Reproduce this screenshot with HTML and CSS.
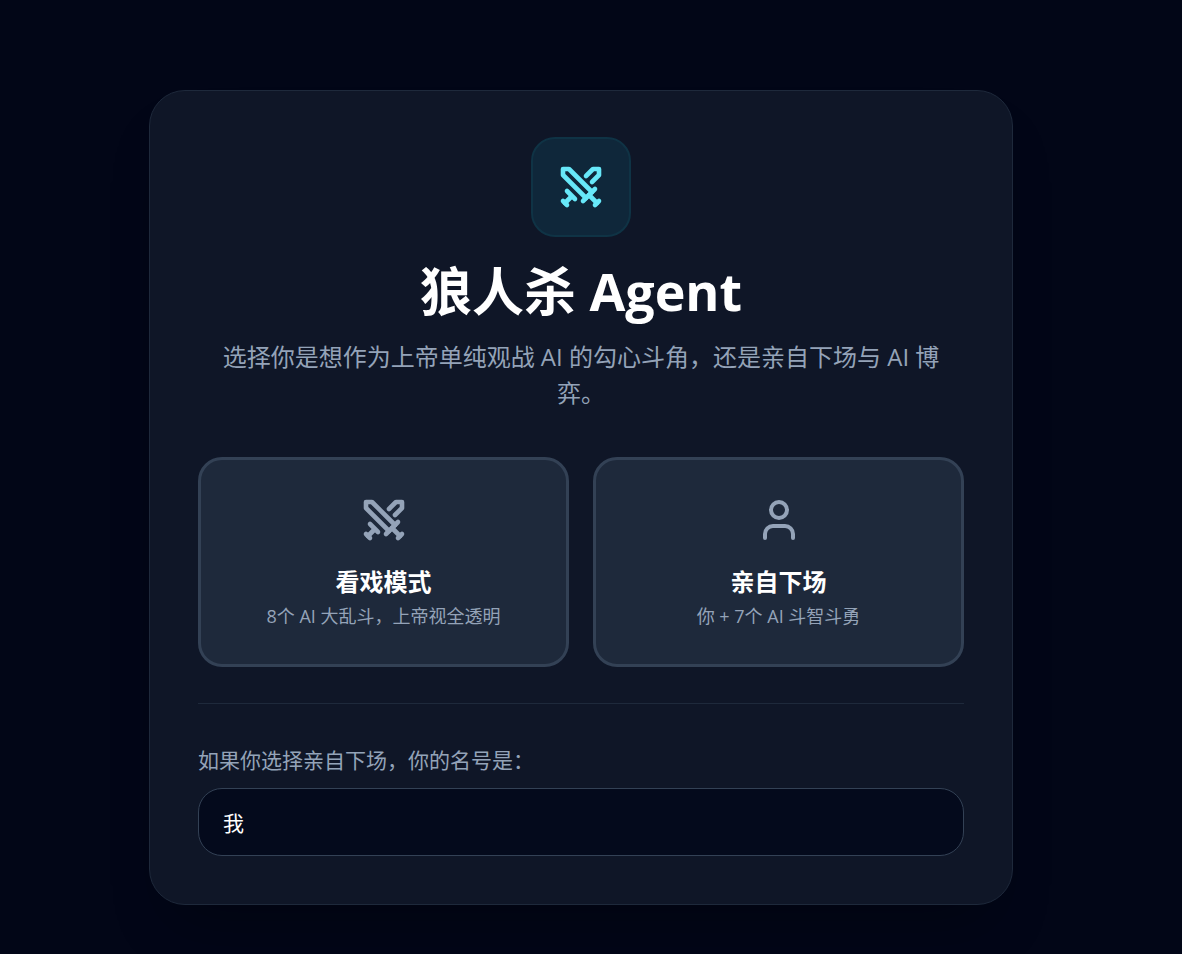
FILE: index.html
```html
<!DOCTYPE html>
<html lang="zh-CN">
<head>
<meta charset="utf-8">
<meta name="viewport" content="width=device-width, initial-scale=1">
<title>狼人杀 Agent</title>
<link rel="stylesheet" href="styles.css">
</head>
<body>
<main class="page">
  <section class="card">
    <header class="intro">
      <div class="badge">
        <svg class="icon icon-swords" viewBox="0 0 24 24" aria-hidden="true">
          <polyline points="14.5 17.5 3 6 3 3 6 3 17.5 14.5"/>
          <line x1="13" x2="19" y1="19" y2="13"/>
          <line x1="16" x2="20" y1="16" y2="20"/>
          <line x1="19" x2="21" y1="21" y2="19"/>
          <polyline points="14.5 6.5 18 3 21 3 21 6 17.5 9.5"/>
          <line x1="5" x2="9" y1="14" y2="18"/>
          <line x1="7" x2="4" y1="17" y2="20"/>
          <line x1="3" x2="5" y1="19" y2="21"/>
        </svg>
      </div>
      <h1 class="title">狼人杀 Agent</h1>
      <p class="lead">选择你是想作为上帝单纯观战 AI 的勾心斗角，还是亲自下场与 AI 博弈。</p>
    </header>
    <div class="modes">
      <button class="mode" type="button">
        <svg class="icon icon-swords" viewBox="0 0 24 24" aria-hidden="true">
          <polyline points="14.5 17.5 3 6 3 3 6 3 17.5 14.5"/>
          <line x1="13" x2="19" y1="19" y2="13"/>
          <line x1="16" x2="20" y1="16" y2="20"/>
          <line x1="19" x2="21" y1="21" y2="19"/>
          <polyline points="14.5 6.5 18 3 21 3 21 6 17.5 9.5"/>
          <line x1="5" x2="9" y1="14" y2="18"/>
          <line x1="7" x2="4" y1="17" y2="20"/>
          <line x1="3" x2="5" y1="19" y2="21"/>
        </svg>
        <span class="mode-name">看戏模式</span>
        <span class="mode-note">8个 AI 大乱斗，上帝视全透明</span>
      </button>
      <button class="mode" type="button">
        <svg class="icon" viewBox="0 0 24 24" aria-hidden="true">
          <path d="M19 21v-2a4 4 0 0 0-4-4H9a4 4 0 0 0-4 4v2"/>
          <circle cx="12" cy="7" r="4"/>
        </svg>
        <span class="mode-name">亲自下场</span>
        <span class="mode-note">你 + 7个 AI 斗智斗勇</span>
      </button>
    </div>
    <div class="field">
      <label class="field-label" for="player-name">如果你选择亲自下场，你的名号是：</label>
      <input class="field-input" id="player-name" type="text" value="我">
    </div>
  </section>
</main>
</body>
</html>
```

FILE: styles.css
```css
* {
  box-sizing: border-box;
}

body {
  margin: 0;
  background: #020617;
  color: #fff;
  font-family: "Open Sans", "Noto Sans CJK SC", sans-serif;
}

.page {
  min-height: 100vh;
  padding: 90px 20px 49px 0;
  display: flex;
  justify-content: center;
  align-items: flex-start;
}

.card {
  width: 100%;
  max-width: 864px;
  padding: 46px 48px 48px;
  border: 1px solid #1e293b;
  border-radius: 36px;
  background: #0f1627;
  box-shadow: 0 36px 60px -24px rgba(0, 0, 0, 0.3);
}

.intro {
  display: flex;
  flex-direction: column;
  align-items: center;
  text-align: center;
}

.icon {
  width: 48px;
  height: 48px;
  fill: none;
  stroke: currentColor;
  stroke-width: 2;
  stroke-linecap: round;
  stroke-linejoin: round;
}

.icon-swords {
  stroke-width: 2.3;
}

.badge {
  display: flex;
  padding: 24px;
  border: 2px solid #0f3345;
  border-radius: 24px;
  background: #0f273a;
  color: #67e8f9;
}

.title {
  margin: 24px 0 18px;
  font-size: 52px;
  line-height: 60px;
  font-weight: 700;
}

.lead {
  margin: 0;
  padding: 0 20px;
  color: #94a3b8;
  font-size: 24px;
  line-height: 36px;
}

.modes {
  display: grid;
  grid-template-columns: 1fr 1fr;
  gap: 24px;
  margin-top: 46px;
}

.mode {
  display: flex;
  flex-direction: column;
  align-items: center;
  padding: 36px 24px;
  border: 3px solid #334155;
  border-radius: 24px;
  background: #1e293b;
  color: #94a3b8;
  font-family: inherit;
  cursor: pointer;
}

.mode-name {
  margin: 20px 0 4px;
  color: #fff;
  font-size: 24px;
  line-height: 36px;
  font-weight: 700;
}

.mode-note {
  font-size: 18px;
  line-height: 24px;
}

.field {
  display: flex;
  flex-direction: column;
  gap: 13px;
  margin-top: 36px;
  padding-top: 41px;
  border-top: 1px solid #1e293b;
}

.field-label {
  color: #94a3b8;
  font-size: 21px;
  line-height: 30px;
}

.field-input {
  width: 100%;
  height: 68px;
  padding: 0 24px;
  border: 1px solid #334155;
  border-radius: 24px;
  outline: none;
  background: #040a1c;
  color: #fff;
  font-family: inherit;
  font-size: 21px;
}
```
